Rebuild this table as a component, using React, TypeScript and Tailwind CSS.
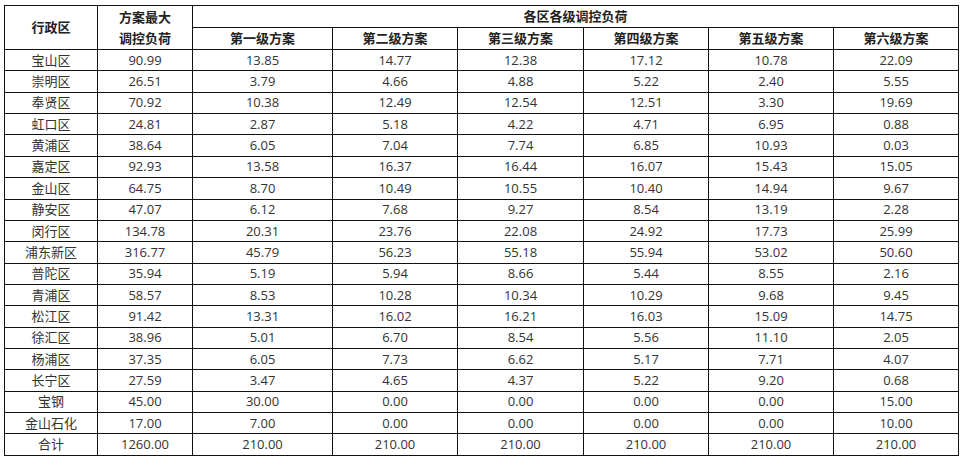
import React from "react";

const rows: [string, string, string, string, string, string, string, string][] = [
  ["宝山区", "90.99", "13.85", "14.77", "12.38", "17.12", "10.78", "22.09"],
  ["崇明区", "26.51", "3.79", "4.66", "4.88", "5.22", "2.40", "5.55"],
  ["奉贤区", "70.92", "10.38", "12.49", "12.54", "12.51", "3.30", "19.69"],
  ["虹口区", "24.81", "2.87", "5.18", "4.22", "4.71", "6.95", "0.88"],
  ["黄浦区", "38.64", "6.05", "7.04", "7.74", "6.85", "10.93", "0.03"],
  ["嘉定区", "92.93", "13.58", "16.37", "16.44", "16.07", "15.43", "15.05"],
  ["金山区", "64.75", "8.70", "10.49", "10.55", "10.40", "14.94", "9.67"],
  ["静安区", "47.07", "6.12", "7.68", "9.27", "8.54", "13.19", "2.28"],
  ["闵行区", "134.78", "20.31", "23.76", "22.08", "24.92", "17.73", "25.99"],
  ["浦东新区", "316.77", "45.79", "56.23", "55.18", "55.94", "53.02", "50.60"],
  ["普陀区", "35.94", "5.19", "5.94", "8.66", "5.44", "8.55", "2.16"],
  ["青浦区", "58.57", "8.53", "10.28", "10.34", "10.29", "9.68", "9.45"],
  ["松江区", "91.42", "13.31", "16.02", "16.21", "16.03", "15.09", "14.75"],
  ["徐汇区", "38.96", "5.01", "6.70", "8.54", "5.56", "11.10", "2.05"],
  ["杨浦区", "37.35", "6.05", "7.73", "6.62", "5.17", "7.71", "4.07"],
  ["长宁区", "27.59", "3.47", "4.65", "4.37", "5.22", "9.20", "0.68"],
  ["宝钢", "45.00", "30.00", "0.00", "0.00", "0.00", "0.00", "15.00"],
  ["金山石化", "17.00", "7.00", "0.00", "0.00", "0.00", "0.00", "10.00"],
  ["合计", "1260.00", "210.00", "210.00", "210.00", "210.00", "210.00", "210.00"],
];

const levels = ["第一级方案", "第二级方案", "第三级方案", "第四级方案", "第五级方案", "第六级方案"];

export default function App() {
  return (
    <div className="w-[965px] h-[464px] bg-white pt-[5px] pl-[4px]" style={{ fontFamily: '"Open Sans", "Noto Sans CJK SC", sans-serif' }}>
      <table className="border-collapse table-fixed w-[954px] text-[13px] leading-none">
        <colgroup>
          <col className="w-[93px]" />
          <col className="w-[95px]" />
          <col className="w-[140px]" />
          <col className="w-[125px]" />
          <col className="w-[126px]" />
          <col className="w-[125px]" />
          <col className="w-[125px]" />
          <col className="w-[125px]" />
        </colgroup>
        <thead>
          <tr className="h-[22px]">
            <th rowSpan={2} className="border border-[#111] font-bold text-[#222] text-center align-middle">行政区</th>
            <th rowSpan={2} className="border border-[#111] font-bold text-[#222] text-center align-middle leading-[21px]">
              方案最大<br />调控负荷
            </th>
            <th colSpan={6} className="border border-[#111] font-bold text-[#222] text-center align-middle">各区各级调控负荷</th>
          </tr>
          <tr className="h-[22px]">
            {levels.map((l) => (
              <th key={l} className="border border-[#111] font-bold text-[#222] text-center align-middle">{l}</th>
            ))}
          </tr>
        </thead>
        <tbody>
          {rows.map((r) => (
            <tr key={r[0]} className="h-[21.37px]">
              {r.map((c, i) => (
                <td key={i} className="border border-[#111] text-[#333] text-center align-middle p-0">{c}</td>
              ))}
            </tr>
          ))}
        </tbody>
      </table>
    </div>
  );
}
